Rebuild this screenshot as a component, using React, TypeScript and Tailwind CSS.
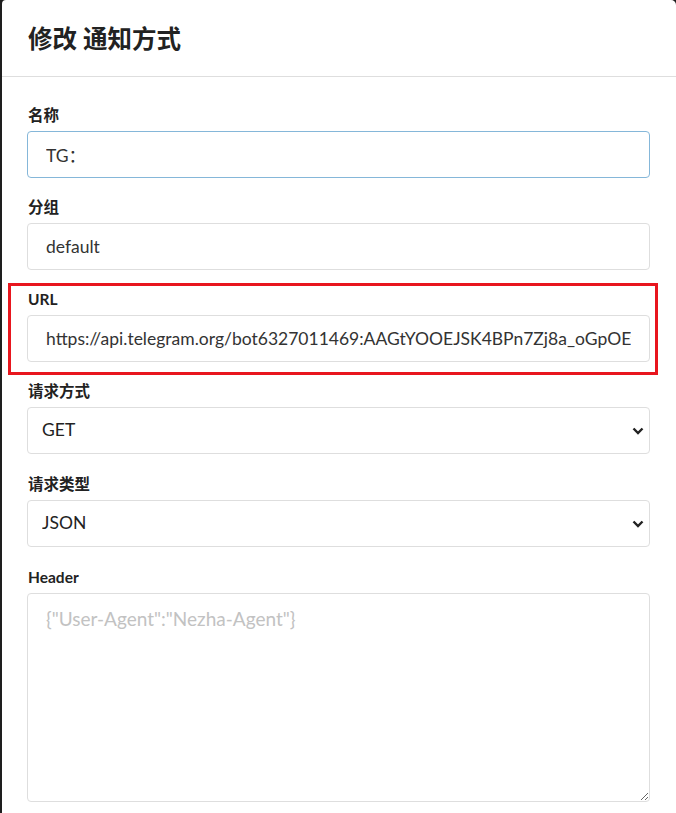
const font = "font-['Lato','Noto_Sans_CJK_SC',sans-serif]";

type FieldProps = {
	label: string;
	children: React.ReactNode;
	marked?: boolean;
	last?: string;
};

const Field = ({ label, children, marked, last = 'mb-[19px]' }: FieldProps) => (
	<div className={`relative ${last}`}>
		<label className="block pl-[1px] mb-[6px] text-[15.5px] leading-[20px] font-bold text-[#222]">
			{label}
		</label>
		{children}
		{marked ? (
			<div className="pointer-events-none absolute -top-[6px] -left-[19px] -right-[8px] -bottom-[13px] border-[3px] border-[#e8161e]" />
		) : null}
	</div>
);

const inputCls =
	'block w-full h-[47px] px-[18px] rounded-[4px] border bg-white text-[17.5px] text-[#333] outline-none';

const Select = ({ value }: { value: string }) => (
	<div className="relative">
		<select
			defaultValue={value}
			className="block w-full h-[47px] pl-[14px] pr-[30px] rounded-[4px] border border-[#dedede] bg-white text-[17.5px] text-[#222] outline-none appearance-none"
		>
			<option>{value}</option>
		</select>
		<svg
			width="12"
			height="8"
			viewBox="0 0 12 8"
			className="pointer-events-none absolute right-[6px] top-1/2 -translate-y-1/2 text-[#222]"
		>
			<path d="M1.5 1.5 L6 6 L10.5 1.5" fill="none" stroke="currentColor" strokeWidth="2.4" />
		</svg>
	</div>
);

export default function App() {
	return (
		<div className={`min-h-screen bg-[#1e1e1e] pl-[2px] ${font}`}>
			<div className="min-h-[813px] bg-white rounded-tl-[4px] rounded-tr-[5px]">
				<div className="h-[77px] border-b border-[#dedede] px-[26px] pt-[2px] flex items-center">
					<h2 className="text-[24.5px] font-bold text-[#222]">修改 通知方式</h2>
				</div>
				<form className="pl-[25px] pr-[26px] pt-[28px]">
					<Field label="名称">
						<input className={`${inputCls} border-[#85b7d9]`} defaultValue="TG：" />
					</Field>
					<Field label="分组">
						<input className={`${inputCls} border-[#dedede]`} defaultValue="default" />
					</Field>
					<Field label="URL" marked>
						<input
							className={`${inputCls} border-[#dedede]`}
							defaultValue="https://api.telegram.org/bot6327011469:AAGtYOOEJSK4BPn7Zj8a_oGpOEfT5x2kQ/sendMessage"
						/>
					</Field>
					<Field label="请求方式" last="mb-[20px]">
						<Select value="GET" />
					</Field>
					<Field label="请求类型" last="mb-[20px]">
						<Select value="JSON" />
					</Field>
					<Field label="Header">
						<textarea
							className="block w-full h-[209px] px-[18px] py-[13px] rounded-[4px] border border-[#dedede] bg-white text-[19px] leading-[24px] text-[#333] placeholder:text-[#c2c2c2] outline-none"
							placeholder={'{"User-Agent":"Nezha-Agent"}'}
						/>
					</Field>
				</form>
			</div>
		</div>
	);
}
